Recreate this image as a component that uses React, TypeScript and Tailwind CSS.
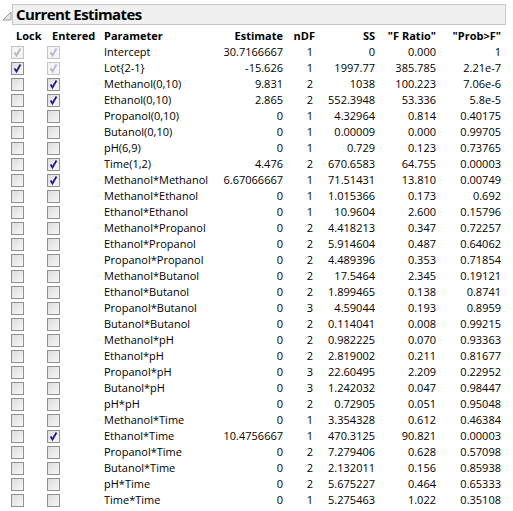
import React from "react";

type Row = [string, string, string, string, string, string, number, number];
// name, estimate, ndf, ss, f, p, lockState, enteredState (0 none, 1 checked, 2 disabled checked)
const rows: Row[] = [
  ["Intercept", "30.7166667", "1", "0", "0.000", "1", 2, 2],
  ["Lot{2-1}", "-15.626", "1", "1997.77", "385.785", "2.21e-7", 1, 2],
  ["Methanol(0,10)", "9.831", "2", "1038", "100.223", "7.06e-6", 0, 1],
  ["Ethanol(0,10)", "2.865", "2", "552.3948", "53.336", "5.8e-5", 0, 1],
  ["Propanol(0,10)", "0", "1", "4.32964", "0.814", "0.40175", 0, 0],
  ["Butanol(0,10)", "0", "1", "0.00009", "0.000", "0.99705", 0, 0],
  ["pH(6,9)", "0", "1", "0.729", "0.123", "0.73765", 0, 0],
  ["Time(1,2)", "4.476", "2", "670.6583", "64.755", "0.00003", 0, 1],
  ["Methanol*Methanol", "6.67066667", "1", "71.51431", "13.810", "0.00749", 0, 1],
  ["Methanol*Ethanol", "0", "1", "1.015366", "0.173", "0.692", 0, 0],
  ["Ethanol*Ethanol", "0", "1", "10.9604", "2.600", "0.15796", 0, 0],
  ["Methanol*Propanol", "0", "2", "4.418213", "0.347", "0.72257", 0, 0],
  ["Ethanol*Propanol", "0", "2", "5.914604", "0.487", "0.64062", 0, 0],
  ["Propanol*Propanol", "0", "2", "4.489396", "0.353", "0.71854", 0, 0],
  ["Methanol*Butanol", "0", "2", "17.5464", "2.345", "0.19121", 0, 0],
  ["Ethanol*Butanol", "0", "2", "1.899465", "0.138", "0.8741", 0, 0],
  ["Propanol*Butanol", "0", "3", "4.59044", "0.193", "0.8959", 0, 0],
  ["Butanol*Butanol", "0", "2", "0.114041", "0.008", "0.99215", 0, 0],
  ["Methanol*pH", "0", "2", "0.982225", "0.070", "0.93363", 0, 0],
  ["Ethanol*pH", "0", "2", "2.819002", "0.211", "0.81677", 0, 0],
  ["Propanol*pH", "0", "3", "22.60495", "2.209", "0.22952", 0, 0],
  ["Butanol*pH", "0", "3", "1.242032", "0.047", "0.98447", 0, 0],
  ["pH*pH", "0", "2", "0.72905", "0.051", "0.95048", 0, 0],
  ["Methanol*Time", "0", "1", "3.354328", "0.612", "0.46384", 0, 0],
  ["Ethanol*Time", "10.4756667", "1", "470.3125", "90.821", "0.00003", 0, 1],
  ["Propanol*Time", "0", "2", "7.279406", "0.628", "0.57098", 0, 0],
  ["Butanol*Time", "0", "2", "2.132011", "0.156", "0.85938", 0, 0],
  ["pH*Time", "0", "2", "5.675227", "0.464", "0.65333", 0, 0],
  ["Time*Time", "0", "1", "5.275463", "1.022", "0.35108", 0, 0],
];

function Box({ state }: { state: number }) {
  const disabled = state === 2;
  return (
    <div
      className={
        "w-[13px] h-[13px] border flex items-center justify-center " +
        (disabled
          ? "border-[#c4c4c4] bg-[#f4f4f4]"
          : "border-[#8f8f8f] bg-gradient-to-br from-[#dcdcdc] to-[#f8f8f8]")
      }
    >
      {state !== 0 && (
        <svg width="11" height="11" viewBox="0 0 11 11">
          <path
            d="M2.5 5.5 L4.5 8.5 L8.5 1.5"
            fill="none"
            stroke={disabled ? "#b4b8c8" : "#1f1f7a"}
            strokeWidth="1.8"
            strokeLinejoin="miter"
          />
        </svg>
      )}
    </div>
  );
}

const grid =
  "grid grid-cols-[36px_56px_120px_63px_32px_60px_61px_65px] items-center";

export default function App() {
  return (
    <div
      className="w-[513px] h-[511px] bg-white text-black overflow-hidden text-[11px]"
      style={{ fontFamily: '"Open Sans", "Noto Sans", sans-serif' }}
    >
      <div className="flex items-center pt-[4px]">
        <svg width="12" height="12" viewBox="0 0 12 12" className="ml-[1px] mr-[-1px] mt-[2px]">
          <path d="M2 10 L10 10 L10 2 Z" fill="#e8e8e8" stroke="#9a9a9a" strokeWidth="1" />
        </svg>
        <div className="ml-0 w-[494px] h-[21px] border border-[#c8c8c8] bg-[#f0f0f0] flex items-center pl-[3px]">
          <span className="font-bold text-[15px] leading-none tracking-[-0.6px]">Current Estimates</span>
        </div>
      </div>
      <div className={grid + " h-[16px] mt-[3px] font-bold ml-[8px] leading-[16px]"}>
        <div className="pl-[8px]">Lock</div>
        <div className="pl-[8px]">Entered</div>
        <div className="pl-[4px]">Parameter</div>
        <div className="text-right">Estimate</div>
        <div className="text-right">nDF</div>
        <div className="text-right">SS</div>
        <div className="text-right">"F Ratio"</div>
        <div className="text-right">"Prob&gt;F"</div>
      </div>
      <div className="ml-[8px]">
        {rows.map((r, i) => (
          <div key={i} className={grid + " h-[16px] leading-[16px] whitespace-nowrap"}>
            <div className="pl-[3px]">
              <Box state={r[6]} />
            </div>
            <div className="pl-[3px]">
              <Box state={r[7]} />
            </div>
            <div className="pl-[4px]">{r[0]}</div>
            <div className="text-right">{r[1]}</div>
            <div className="text-right pr-[2px]">{r[2]}</div>
            <div className="text-right">{r[3]}</div>
            <div className="text-right">{r[4]}</div>
            <div className="text-right">{r[5]}</div>
          </div>
        ))}
      </div>
    </div>
  );
}
